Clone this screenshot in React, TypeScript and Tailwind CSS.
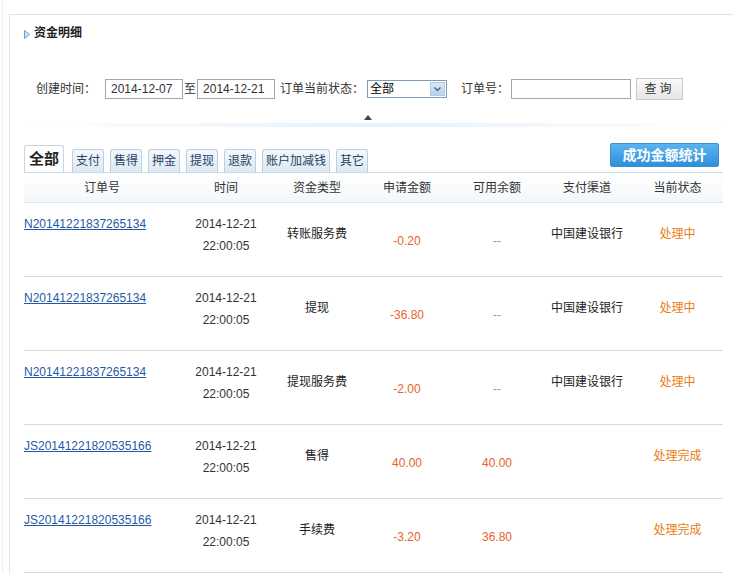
import React from 'react';

const tabs = ['支付', '售得', '押金', '提现', '退款', '账户加减钱', '其它'];

const rows = [
  { no: 'N20141221837265134', type: '转账服务费', amount: '-0.20', balance: '--', channel: '中国建设银行', status: '处理中' },
  { no: 'N20141221837265134', type: '提现', amount: '-36.80', balance: '--', channel: '中国建设银行', status: '处理中' },
  { no: 'N20141221837265134', type: '提现服务费', amount: '-2.00', balance: '--', channel: '中国建设银行', status: '处理中' },
  { no: 'JS20141221820535166', type: '售得', amount: '40.00', balance: '40.00', channel: '', status: '处理完成' },
  { no: 'JS20141221820535166', type: '手续费', amount: '-3.20', balance: '36.80', channel: '', status: '处理完成' },
];

const cols = 'grid grid-cols-[156px_92px_90px_90px_90px_90px_91px]';

export default function App() {
  return (
    <div className="w-[733px] h-[573px] overflow-hidden bg-white text-[12px] text-[#333] flex" style={{ fontFamily: '"Liberation Sans", "Noto Sans CJK SC", sans-serif' }}>
      <div className="w-[3px] shrink-0 border-r border-[#eeeeee]" />
      <div className="w-[6px] shrink-0" />
      <div className="flex-1 mt-[14px] border-t border-l border-[#e2e2e2] pl-[14px] pr-[10px]">
        {/* title */}
        <div className="flex items-center h-[34px] mt-[1px]">
          <svg width="6" height="9" viewBox="0 0 6 9" className="mr-[4px] mt-[2px]">
            <path d="M0.5 0.5 L5.5 4.5 L0.5 8.5 Z" fill="#cfe3f5" stroke="#6a9ccc" strokeWidth="1" />
          </svg>
          <span className="font-bold text-[12px] text-[#222]">资金明细</span>
        </div>

        {/* filters */}
        <div className="flex items-center mt-[27px] h-[24px] pl-[12px]">
          <span>创建时间：</span>
          <div className="ml-[9px] w-[78px] h-[20px] border border-[#a5a5a5] flex items-center px-[5px] text-[12px]">2014-12-07</div>
          <span className="mx-[1px]">至</span>
          <div className="w-[78px] h-[20px] border border-[#a5a5a5] flex items-center px-[5px] text-[12px]">2014-12-21</div>
          <span className="ml-[5px]">订单当前状态：</span>
          <div className="ml-[3px] w-[80px] h-[18px] border border-[#7f9db9] flex items-center justify-between pl-[2px] pr-[1px]">
            <span className="text-[12px] text-black">全部</span>
            <div className="w-[15px] h-[14px] bg-gradient-to-b from-[#dce8f8] to-[#b8cfee] border border-[#b5c8e6] flex items-center justify-center">
              <svg width="7" height="5" viewBox="0 0 7 5">
                <path d="M0.5 0.5 L3.5 3.5 L6.5 0.5" fill="none" stroke="#4d6185" strokeWidth="1.5" />
              </svg>
            </div>
          </div>
          <span className="ml-[14px]">订单号：</span>
          <div className="ml-[2px] w-[120px] h-[20px] border border-[#a5a5a5]" />
          <div className="ml-[5px] w-[47px] h-[22px] border border-[#c8c8c8] bg-gradient-to-b from-[#fafafa] to-[#e6e6e6] flex items-center justify-center text-[12px] text-[#333] tracking-[3px]">查询</div>
        </div>

        {/* divider with arrow */}
        <div className="flex justify-center mt-[14px] pr-[15px]">
          <svg width="8" height="5" viewBox="0 0 8 5" className="ml-[4px]">
            <path d="M0 5 L4 0 L8 5 Z" fill="#444" />
          </svg>
        </div>
        <div className="h-[4px] mt-[3px] bg-gradient-to-r from-white via-[#e6f1fa] to-white" />

        {/* tabs */}
        <div className="flex items-end justify-between mt-[16px] pr-[4px]">
          <div className="flex items-end gap-[6px]">
            <div className="h-[27px] px-[4px] mr-[2px] flex items-center border border-b-0 border-[#c5d5e4] rounded-t-[3px] bg-white font-bold text-[15px] text-[#222]">全部</div>
            {tabs.map((t) => (
              <div key={t} className="h-[23px] px-[3px] flex items-center border border-b-0 border-[#bccfe2] rounded-t-[3px] bg-gradient-to-b from-[#f2f7fc] to-[#dde9f5] text-[12px] text-[#2a4260]">
                {t}
              </div>
            ))}
          </div>
          <div className="mb-[5px] w-[109px] h-[24px] rounded-[2px] bg-gradient-to-b from-[#5bb4ef] to-[#2f8fd8] border border-[#3a8fd0] flex items-center justify-center text-white font-bold text-[14px]">
            成功金额统计
          </div>
        </div>

        {/* table */}
        <div className="w-[699px]">
          <div className={`${cols} h-[31px] items-center border-t border-[#c9dbeb] border-b border-b-[#dfe6ee] bg-gradient-to-b from-white to-[#f4f7fa] text-center`}>
            <span>订单号</span>
            <span>时间</span>
            <span>资金类型</span>
            <span>申请金额</span>
            <span>可用余额</span>
            <span>支付渠道</span>
            <span>当前状态</span>
          </div>
          {rows.map((r, i) => (
            <div key={i} className={`${cols} h-[74px] border-b border-[#d9d9d9] pt-[10px] items-start`}>
              <a className="text-[#1f5aa6] underline leading-[22px]" href="#">{r.no}</a>
              <div className="text-center leading-[22px]">
                <div>2014-12-21</div>
                <div>22:00:05</div>
              </div>
              <div className="h-[42px] flex items-center justify-center text-[#222]">{r.type}</div>
              <div className="h-[42px] flex items-center justify-center text-[#e8632e] pt-[14px]">{r.amount}</div>
              <div className={`h-[42px] flex items-center justify-center pt-[14px] ${r.balance === '--' ? 'text-[#999]' : 'text-[#e8632e]'}`}>{r.balance}</div>
              <div className="h-[42px] flex items-center justify-center text-[#222]">{r.channel}</div>
              <div className="h-[42px] flex items-center justify-center text-[#ea7b10]">{r.status}</div>
            </div>
          ))}
        </div>
      </div>
    </div>
  );
}
